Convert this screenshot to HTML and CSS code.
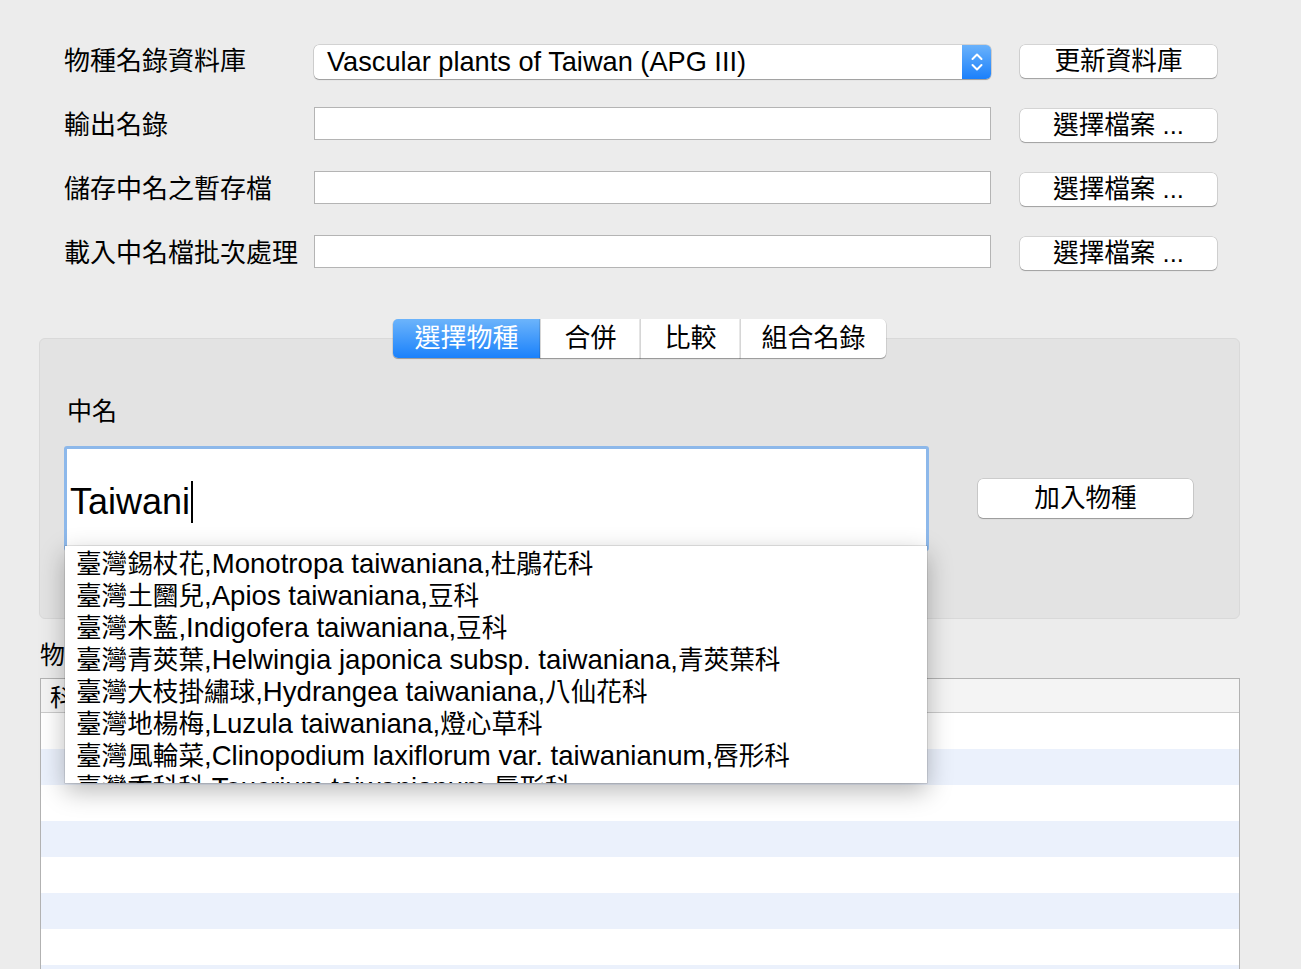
FILE: index.html
```html
<!DOCTYPE html>
<html lang="zh-Hant">
<head>
<meta charset="utf-8">
<title>物種名錄</title>
<link rel="stylesheet" href="styles.css">
</head>
<body>
<div class="window">
  <div class="form">
    <div class="label">物種名錄資料庫</div>
    <div class="popup">
      <span class="popup-text">Vascular plants of Taiwan (APG III)</span>
      <span class="stepper">
        <svg width="14" height="22" viewBox="0 0 14 22"><path d="M2.5 8 L7 3.5 L11.5 8 M2.5 14 L7 18.5 L11.5 14" fill="none" stroke="#fff" stroke-width="2" stroke-linecap="round" stroke-linejoin="round"/></svg>
      </span>
    </div>
    <div class="btn">更新資料庫</div>

    <div class="label">輸出名錄</div>
    <div class="field"></div>
    <div class="btn">選擇檔案 ...</div>

    <div class="label">儲存中名之暫存檔</div>
    <div class="field"></div>
    <div class="btn">選擇檔案 ...</div>

    <div class="label">載入中名檔批次處理</div>
    <div class="field"></div>
    <div class="btn">選擇檔案 ...</div>
  </div>

  <div class="tabs">
    <div class="seg seg-on">選擇物種</div>
    <div class="seg seg-2">合併</div>
    <div class="seg seg-3">比較</div>
    <div class="seg seg-4">組合名錄</div>
  </div>

  <div class="tabbox">
    <div class="cn-label">中名</div>
    <div class="cn-row">
      <div class="combo">
        <div class="bigfield"><span class="typed">Taiwani</span><span class="caret"></span></div>
        <div class="menu">
          <div class="item">臺灣錫杖花<span class="la">,Monotropa taiwaniana,</span>杜鵑花科</div>
          <div class="item">臺灣土圞兒<span class="la">,Apios taiwaniana,</span>豆科</div>
          <div class="item">臺灣木藍<span class="la">,Indigofera taiwaniana,</span>豆科</div>
          <div class="item">臺灣青莢葉<span class="la">,Helwingia japonica subsp. taiwaniana,</span>青莢葉科</div>
          <div class="item">臺灣大枝掛繡球<span class="la">,Hydrangea taiwaniana,</span>八仙花科</div>
          <div class="item">臺灣地楊梅<span class="la">,Luzula taiwaniana,</span>燈心草科</div>
          <div class="item">臺灣風輪菜<span class="la">,Clinopodium laxiflorum var. taiwanianum,</span>唇形科</div>
          <div class="item">臺灣香科科<span class="la">,Teucrium taiwanianum,</span>唇形科</div>
        </div>
      </div>
      <div class="btn btn-add">加入物種</div>
    </div>
  </div>

  <div class="list-label">物種清單</div>
  <div class="table">
    <div class="thead"><span class="th">科</span></div>
    <div class="tr"></div>
    <div class="tr alt"></div>
    <div class="tr"></div>
    <div class="tr alt"></div>
    <div class="tr"></div>
    <div class="tr alt"></div>
    <div class="tr"></div>
    <div class="tr alt"></div>
  </div>
</div>
</body>
</html>
```

FILE: styles.css
```css
html, body {
  margin: 0;
  padding: 0;
  background: #ececec;
  overflow: hidden;
  height: 969px;
}
body {
  font-family: "Liberation Sans", "Noto Sans CJK TC", sans-serif;
  color: #000;
  font-size: 26px;
}
.window {
  padding: 45px 0 0 0;
}
.form {
  display: grid;
  grid-template-columns: 221px 677px 197px;
  column-gap: 29px;
  row-gap: 30px;
  grid-auto-rows: 34px;
  margin-left: 64px;
}
.label {
  font-size: 26px;
  line-height: 34px;
  white-space: nowrap;
  margin-top: -1px;
}
.popup {
  background: #fff;
  border-radius: 5px;
  box-shadow: 0 0 0 0.5px rgba(0,0,0,0.22), 0 1px 1px rgba(0,0,0,0.25);
  display: flex;
  align-items: center;
  overflow: hidden;
  height: 34px;
}
.popup-text {
  flex: 1;
  padding-left: 13px;
  font-size: 27.2px;
  line-height: 34px;
  white-space: nowrap;
}
.stepper {
  width: 29px;
  height: 34px;
  background: linear-gradient(#6ab2fb, #1b80fb);
  display: flex;
  align-items: center;
  justify-content: center;
}
.field {
  background: #fff;
  border: 1px solid #b4b4b4;
  height: 31px;
  margin-top: -2px;
}
.btn {
  background: #fff;
  border-radius: 5px;
  box-shadow: 0 0 0 0.5px rgba(0,0,0,0.2), 0 1px 1px rgba(0,0,0,0.25);
  height: 33px;
  line-height: 33px;
  text-align: center;
  font-size: 25.6px;
  white-space: nowrap;
}
.tabs {
  display: flex;
  justify-content: center;
  margin: 48px 61px 0 39px;
  position: relative;
  z-index: 2;
}
.seg {
  height: 39px;
  line-height: 39px;
  background: #fff;
  font-size: 26px;
  text-align: center;
  box-shadow: 0 0.5px 0 0.5px rgba(0,0,0,0.15), 0 1px 1px rgba(0,0,0,0.2);
}
.seg-on {
  width: 147px;
  background: linear-gradient(#6cb4fb, #1a81fb);
  color: #fff;
  border-radius: 5px 0 0 5px;
}
.seg-2 {
  width: 99px;
  border-left: 1px solid #d6d6d6;
}
.seg-3 {
  width: 99px;
  border-left: 1px solid #d6d6d6;
}
.seg-4 {
  width: 145px;
  border-left: 1px solid #d6d6d6;
  border-radius: 0 5px 5px 0;
}
.tabbox {
  margin: -20px 61px 0 39px;
  height: 279px;
  background: #e3e3e3;
  border: 1px solid #d9d9d9;
  border-radius: 6px;
  position: relative;
  z-index: 1;
}
.cn-label {
  margin: 55px 0 0 27px;
  font-size: 25px;
  line-height: 34px;
}
.cn-row {
  display: flex;
  align-items: flex-start;
  margin-top: 18px;
  margin-left: 24px;
}
.combo {
  position: relative;
  width: 865px;
}
.bigfield {
  height: 99px;
  background: #fff;
  border: 3px solid #8db8ea;
  border-radius: 3px;
  box-sizing: content-box;
  width: 859px;
  display: flex;
  align-items: center;
}
.typed {
  font-size: 36px;
  margin-left: 3px;
  line-height: 42px;
  margin-top: 6px;
}
.caret {
  display: inline-block;
  width: 2px;
  height: 42px;
  background: #000;
  margin-left: 1px;
  margin-top: 6px;
}
.menu {
  position: absolute;
  left: 1px;
  top: 100px;
  width: 862px;
  height: 237px;
  padding-top: 2px;
  box-sizing: border-box;
  background: #fff;
  overflow: hidden;
  box-shadow: 0 0 0 0.5px rgba(0,0,0,0.2), 0 8px 24px rgba(0,0,0,0.28);
  z-index: 5;
}
.item {
  height: 32px;
  line-height: 32px;
  padding-left: 11px;
  font-size: 25.6px;
  white-space: nowrap;
}
.la {
  font-size: 27.6px;
}
.btn-add {
  width: 215px;
  margin-left: 49px;
  margin-top: 33px;
  height: 39px;
  line-height: 39px;
}
.list-label {
  margin: 19px 0 0 40px;
  font-size: 25px;
  line-height: 34px;
  height: 40px;
}
.table {
  margin: 0 61px 0 40px;
  border: 1px solid #b2b2b2;
  background: #fff;
}
.thead {
  height: 33px;
  background: #f4f4f4;
  border-bottom: 1px solid #cbcbcb;
  display: flex;
  align-items: center;
}
.th {
  padding-left: 9px;
  font-size: 24px;
}
.tr {
  height: 36px;
  background: #fff;
}
.tr.alt {
  background: #ebf1fc;
}
```
